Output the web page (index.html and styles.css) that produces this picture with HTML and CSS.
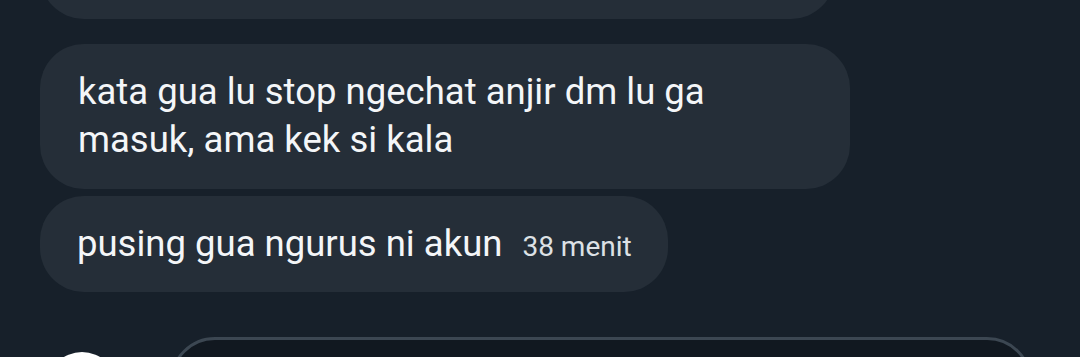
FILE: index.html
```html
<html>
<head>
	<title>Pesan</title>
	<link rel="stylesheet" href="styles.css">
</head>
<body>
	<div class='chat'>
		<section class='messages'>
			<div class='bubble previous'></div>
			<div class='bubble first'>kata gua lu stop ngechat anjir dm lu ga masuk, ama kek si kala</div>
			<div class='bubble last'>pusing gua ngurus ni akun<span class='time'>38 menit</span></div>
		</section>
		<section class='composer'>
			<div class='avatar'></div>
			<div class='input'></div>
		</section>
	</div>
</body>
</html>
```

FILE: styles.css
```css
* {box-sizing: border-box;}
body {margin: 0; background-color: #17202a; font-family: Roboto, "Noto Sans", sans-serif; color: #f4f6f8; overflow: hidden;}
.chat {height: 357px; overflow: hidden;}

.messages {display: flex; flex-direction: column; align-items: flex-start; padding: 0 40px;}

.bubble {
	max-width: 810px;
	background-color: #252e38;
	border-radius: 44px;
	padding: 24px 38px;
	font-size: 36.5px;
	line-height: 48px;
}

.bubble.previous {width: 795px; height: 90px; margin-top: -71px;}
.bubble.first {width: 810px; margin-top: 25px; padding-bottom: 25px;}
.bubble.last {margin-top: 7px; padding-left: 37px; padding-right: 36px;}

.time {
	font-size: 28px;
	line-height: 1;
	color: #dde1e5;
	margin-left: 20px;
}

.composer {display: flex; align-items: flex-start; margin-top: 45px; padding: 0 48px 0 47px;}

.avatar {
	width: 70px;
	height: 70px;
	border-radius: 50%;
	background-color: #ffffff;
	margin-top: 15px;
	margin-right: 53px;
}

.input {
	flex: 1;
	height: 90px;
	border: 3px solid #3c4752;
	border-radius: 45px;
	background-color: #111820;
}
```
